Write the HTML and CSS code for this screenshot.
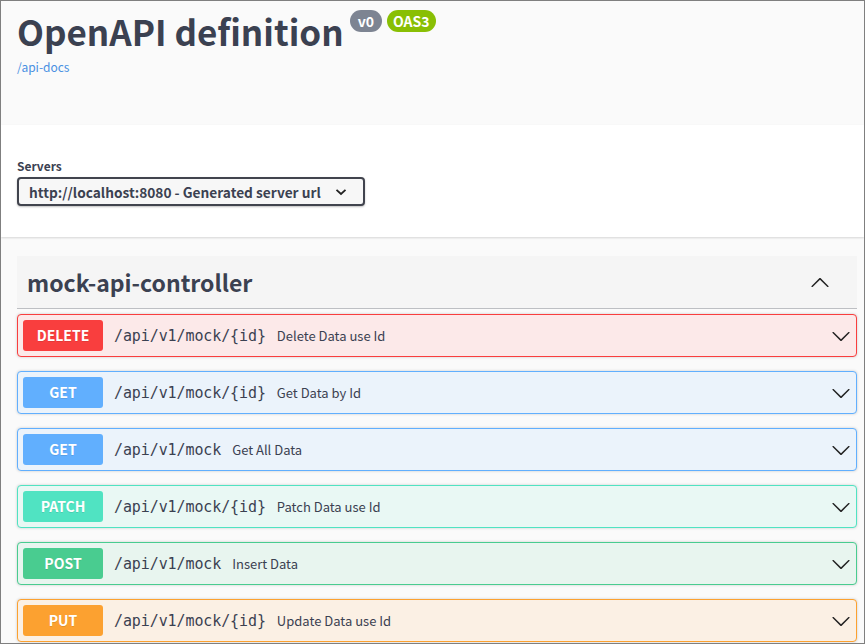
FILE: index.html
```html
<!DOCTYPE html>
<html lang="en">
<head>
<meta charset="utf-8">
<title>Swagger UI</title>
<link rel="stylesheet" href="styles.css">
</head>
<body>
<div class="frame">
  <section class="info">
    <div class="title-row">
      <h1 class="title">OpenAPI definition</h1>
      <span class="badge badge-version">v0</span>
      <span class="badge badge-oas">OAS3</span>
    </div>
    <a class="docs-link" href="#">/api-docs</a>
  </section>

  <section class="scheme">
    <div class="servers">
      <label class="servers-label">Servers</label>
      <div class="select">
        <span class="select-text">http://localhost:8080 - Generated server url</span>
        <svg class="select-arrow" width="12" height="8" viewBox="0 0 12 8"><path d="M1.5 1.8 L6 6 L10.5 1.8" fill="none" stroke="#222" stroke-width="1.8"/></svg>
      </div>
    </div>
  </section>

  <section class="content">
    <div class="tag">
      <h3 class="tag-name">mock-api-controller</h3>
      <svg class="tag-arrow" width="20" height="20" viewBox="0 0 20 20"><path d="M17.418 14.908c.272.268.709.268.979 0s.271-.701 0-.969l-7.908-7.83c-.27-.268-.707-.268-.979 0l-7.908 7.83c-.27.268-.27.701 0 .969.271.268.709.268.979 0L10 7.767l7.418 7.141z" fill="#222"/></svg>
    </div>

    <div class="opblock op-delete">
      <span class="method">DELETE</span>
      <span class="path">/api/v1/mock/{id}</span>
      <span class="desc">Delete Data use Id</span>
      <svg class="op-arrow" width="20" height="20" viewBox="0 0 20 20"><path d="M17.418 6.109c.272-.268.709-.268.979 0s.271.701 0 .969l-7.908 7.83c-.27.268-.707.268-.979 0l-7.908-7.83c-.27-.268-.27-.701 0-.969.271-.268.709-.268.979 0L10 13.25l7.418-7.141z" fill="#222"/></svg>
    </div>

    <div class="opblock op-get">
      <span class="method">GET</span>
      <span class="path">/api/v1/mock/{id}</span>
      <span class="desc">Get Data by Id</span>
      <svg class="op-arrow" width="20" height="20" viewBox="0 0 20 20"><path d="M17.418 6.109c.272-.268.709-.268.979 0s.271.701 0 .969l-7.908 7.83c-.27.268-.707.268-.979 0l-7.908-7.83c-.27-.268-.27-.701 0-.969.271-.268.709-.268.979 0L10 13.25l7.418-7.141z" fill="#222"/></svg>
    </div>

    <div class="opblock op-get">
      <span class="method">GET</span>
      <span class="path">/api/v1/mock</span>
      <span class="desc">Get All Data</span>
      <svg class="op-arrow" width="20" height="20" viewBox="0 0 20 20"><path d="M17.418 6.109c.272-.268.709-.268.979 0s.271.701 0 .969l-7.908 7.83c-.27.268-.707.268-.979 0l-7.908-7.83c-.27-.268-.27-.701 0-.969.271-.268.709-.268.979 0L10 13.25l7.418-7.141z" fill="#222"/></svg>
    </div>

    <div class="opblock op-patch">
      <span class="method">PATCH</span>
      <span class="path">/api/v1/mock/{id}</span>
      <span class="desc">Patch Data use Id</span>
      <svg class="op-arrow" width="20" height="20" viewBox="0 0 20 20"><path d="M17.418 6.109c.272-.268.709-.268.979 0s.271.701 0 .969l-7.908 7.83c-.27.268-.707.268-.979 0l-7.908-7.83c-.27-.268-.27-.701 0-.969.271-.268.709-.268.979 0L10 13.25l7.418-7.141z" fill="#222"/></svg>
    </div>

    <div class="opblock op-post">
      <span class="method">POST</span>
      <span class="path">/api/v1/mock</span>
      <span class="desc">Insert Data</span>
      <svg class="op-arrow" width="20" height="20" viewBox="0 0 20 20"><path d="M17.418 6.109c.272-.268.709-.268.979 0s.271.701 0 .969l-7.908 7.83c-.27.268-.707.268-.979 0l-7.908-7.830c-.27-.268-.27-.701 0-.969.271-.268.709-.268.979 0L10 13.25l7.418-7.141z" fill="#222"/></svg>
    </div>

    <div class="opblock op-put">
      <span class="method">PUT</span>
      <span class="path">/api/v1/mock/{id}</span>
      <span class="desc">Update Data use Id</span>
      <svg class="op-arrow" width="20" height="20" viewBox="0 0 20 20"><path d="M17.418 6.109c.272-.268.709-.268.979 0s.271.701 0 .969l-7.908 7.83c-.27.268-.707.268-.979 0l-7.908-7.83c-.27-.268-.27-.701 0-.969.271-.268.709-.268.979 0L10 13.25l7.418-7.141z" fill="#222"/></svg>
    </div>
  </section>
</div>
</body>
</html>
```

FILE: styles.css
```css
* { box-sizing: border-box; }

html, body {
  margin: 0;
  padding: 0;
  background: #fafafa;
}

body {
  font-family: "Noto Sans CJK KR", "Noto Sans", sans-serif;
  color: #3b4151;
}

.frame {
  width: 865px;
  height: 644px;
  border: 1px solid #7f7f7f;
  overflow: hidden;
  background: #fafafa;
}

/* ---------- info header ---------- */
.info {
  height: 124px;
  padding: 5px 7px 0 16px;
  background: #fafafa;
}

.title-row {
  display: flex;
  align-items: flex-start;
}

.title {
  margin: 0;
  font-size: 35px;
  line-height: 50px;
  font-weight: 700;
  color: #3b4151;
}

.badge {
  margin-top: 4px;
  padding: 0 8px;
  height: 22px;
  line-height: 22px;
  border-radius: 11px;
  color: #fff;
  font-size: 14px;
  font-weight: 700;
}

.badge-version {
  margin-left: 6px;
  background: #7d8492;
}

.badge-oas {
  margin-left: 5px;
  padding: 0 6px;
  background: #89bf04;
}

.docs-link {
  display: block;
  margin-top: 2px;
  font-size: 12px;
  line-height: 18px;
  color: #4990e2;
  text-decoration: none;
}

/* ---------- servers ---------- */
.scheme {
  height: 112px;
  background: #fff;
  box-shadow: 0 1px 2px 0 rgba(0, 0, 0, 0.15);
  padding: 33px 7px 0 16px;
  position: relative;
}

.servers-label {
  display: block;
  font-size: 12px;
  line-height: 16px;
  font-weight: 700;
  color: #3b4151;
}

.select {
  margin-top: 3px;
  width: 348px;
  height: 29px;
  display: flex;
  align-items: center;
  justify-content: space-between;
  padding: 0 16px 0 10px;
  border: 2px solid #41444e;
  border-radius: 4px;
  background: #f7f7f7;
  box-shadow: 0 1px 2px 0 rgba(0, 0, 0, 0.25);
}

.select-text {
  font-size: 13.7px;
  font-weight: 700;
  color: #3b4151;
  line-height: 20px;
}

.select-arrow { display: block; }

/* ---------- operations ---------- */
.content {
  padding: 19px 7px 0 16px;
}

.tag {
  display: flex;
  align-items: center;
  justify-content: space-between;
  height: 53px;
  padding: 0 27px 0 10px;
  background: #f5f5f5;
  border-bottom: 1px solid rgba(59, 65, 81, 0.3);
  margin-bottom: 5px;
}

.tag-name {
  margin: 0;
  font-size: 23px;
  line-height: 32px;
  font-weight: 700;
  color: #3b4151;
}

.tag-arrow { display: block; }

.opblock {
  display: flex;
  align-items: center;
  height: 43px;
  padding: 0 5px;
  margin-bottom: 14px;
  border: 1px solid;
  border-radius: 4px;
  box-shadow: 0 0 3px rgba(0, 0, 0, 0.19);
}

.method {
  min-width: 80px;
  height: 31px;
  line-height: 31px;
  border-radius: 3px;
  color: #fff;
  font-size: 14px;
  font-weight: 700;
  text-align: center;
  text-shadow: 0 1px 0 rgba(0, 0, 0, 0.1);
}

.path {
  padding: 0 11px 0 11px;
  font-family: "DejaVu Sans Mono", monospace;
  font-size: 15px;
  color: #3b4151;
  letter-spacing: -0.1px;
}

.desc {
  flex: 1;
  font-size: 13px;
  color: #3b4151;
}

.op-arrow { display: block; }

.op-delete { background: #fce9e9; border-color: #f93e3e; }
.op-delete .method { background: #f93e3e; }

.op-get { background: #ebf3fb; border-color: #61affe; }
.op-get .method { background: #61affe; }

.op-patch { background: #e9f8f4; border-color: #50e3c2; }
.op-patch .method { background: #50e3c2; }

.op-post { background: #e8f5ef; border-color: #49cc90; }
.op-post .method { background: #49cc90; }

.op-put { background: #fbf0e4; border-color: #fca130; }
.op-put .method { background: #fca130; }
```
